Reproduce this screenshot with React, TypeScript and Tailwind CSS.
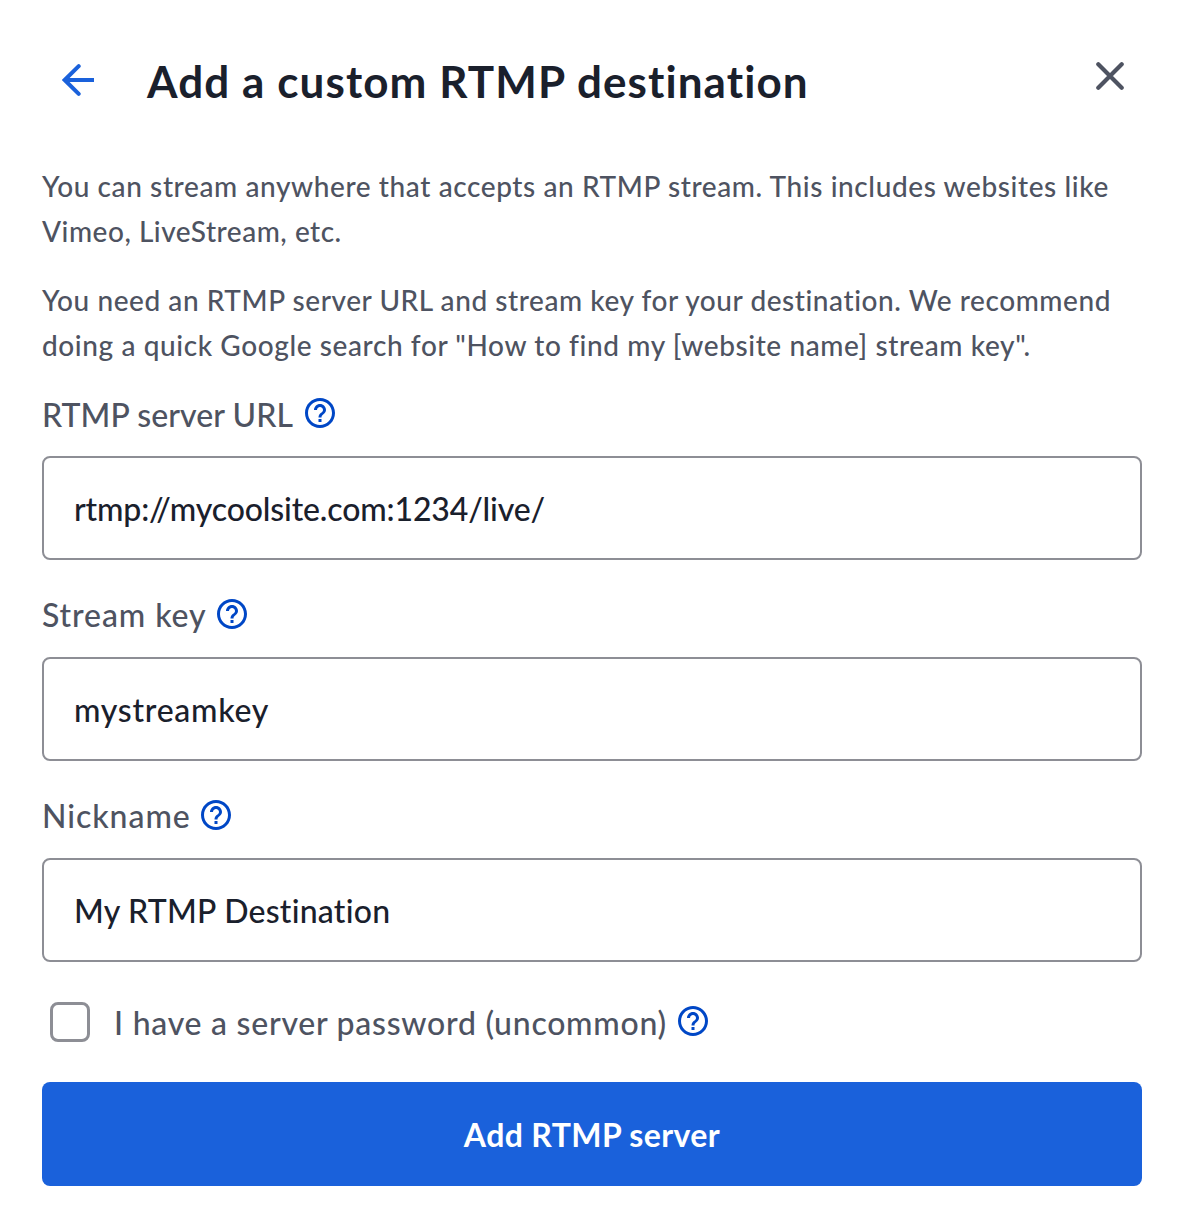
import React, { useState } from 'react';
import { MdHelpOutline } from 'react-icons/md';

interface FieldProps {
  id: string;
  label: string;
  labelClass: string;
  inputClass: string;
  value: string;
  onChange: (value: string) => void;
}

const HelpButton: React.FC<{ label: string }> = ({ label }) => (
  <button type="button" aria-label={label} className="shrink-0 text-[#0047c6]">
    <MdHelpOutline className="size-9" />
  </button>
);

const Field: React.FC<FieldProps> = ({ id, label, labelClass, inputClass, value, onChange }) => (
  <div>
    <div className="flex h-[46px] items-center">
      <label htmlFor={id} className={`leading-[46px] ${labelClass}`}>
        {label}
      </label>
      <HelpButton label={`Help: ${label}`} />
    </div>
    <input
      id={id}
      type="text"
      value={value}
      onChange={(e) => onChange(e.target.value)}
      className={`mt-5 block h-[104px] w-full rounded-lg border-2 border-[#8d8e95] bg-white px-[30px] text-[#1a202c] outline-none ${inputClass}`}
    />
  </div>
);

export default function App() {
  const [serverUrl, setServerUrl] = useState('rtmp://mycoolsite.com:1234/live/');
  const [streamKey, setStreamKey] = useState('mystreamkey');
  const [nickname, setNickname] = useState('My RTMP Destination');
  const [hasPassword, setHasPassword] = useState(false);

  return (
    <div className="h-[1228px] w-[1182px] overflow-hidden bg-white pt-[52px] pr-10 pl-[42px] font-['Lato','Liberation_Sans',sans-serif] text-[32px] font-medium text-[#4e5361]">
      {/* Header */}
      <header className="flex h-14 items-center pr-[18px] pl-5">
        <button type="button" aria-label="Back" className="text-[#1a61db]">
          <svg width="32" height="32" viewBox="0 0 32 32" fill="none" stroke="currentColor" strokeWidth="4">
            <path d="M16.7 2.2L2.7 16l14 13.8" strokeLinecap="round" strokeLinejoin="miter" />
            <path d="M3 16h29" />
          </svg>
        </button>
        <h1 className="ml-[53px] flex-1 pt-0.5 text-[44px] leading-[56px] font-bold tracking-[1.09px] whitespace-nowrap text-[#1a202c]">
          Add a custom RTMP destination
        </h1>
        <button type="button" aria-label="Close" className="-mt-2">
          <svg width="28" height="28" viewBox="0 0 28 28" fill="none" stroke="currentColor" strokeWidth="4.2" strokeLinecap="round">
            <path d="M2.3 2.3l23.4 23.4M25.7 2.3L2.3 25.7" />
          </svg>
        </button>
      </header>

      {/* Intro copy */}
      <div className="mt-14 space-y-6 text-[28px] leading-[45px] tracking-[0.6px] whitespace-nowrap">
        <p>
          You can stream anywhere that accepts an RTMP stream. This includes websites like
          <br />
          <span className="tracking-[0.52px]">Vimeo, LiveStream, etc.</span>
        </p>
        <p>
          <span className="tracking-[0.56px]">
            You need an RTMP server URL and stream key for your destination. We recommend
          </span>
          <br />
          doing a quick Google search for "How to find my [website name] stream key".
        </p>
      </div>

      <form onSubmit={(e) => e.preventDefault()}>
        <div className="mt-[22px] space-y-[31px]">
          <Field
            id="server-url"
            label="RTMP server URL"
            labelClass="mr-[9px] pt-1 tracking-[0.08px]"
            inputClass="tracking-[-0.14px]"
            value={serverUrl}
            onChange={setServerUrl}
          />
          <Field
            id="stream-key"
            label="Stream key"
            labelClass="mr-[7px] pt-0.5 tracking-[0.9px]"
            inputClass="tracking-[0.74px]"
            value={streamKey}
            onChange={setStreamKey}
          />
          <Field
            id="nickname"
            label="Nickname"
            labelClass="mr-[7px] pt-0.5 tracking-[0.95px]"
            inputClass="tracking-[0.24px]"
            value={nickname}
            onChange={setNickname}
          />
        </div>

        <div className="mt-10 flex h-10 items-center pl-2">
          <input
            id="has-password"
            type="checkbox"
            checked={hasPassword}
            onChange={(e) => setHasPassword(e.target.checked)}
            className="size-10 appearance-none rounded-lg border-[3px] border-[#8d8e95] bg-white checked:bg-[#1a61db]"
          />
          <label htmlFor="has-password" className="mr-2 ml-6 pt-0.5 leading-10 tracking-[0.74px] whitespace-nowrap">
            I have a server password (uncommon)
          </label>
          <div className="-mt-0.5 flex">
            <HelpButton label="Help: server password" />
          </div>
        </div>

        <button
          type="submit"
          className="mt-10 block h-[104px] w-full rounded-lg bg-[#1a61db] pt-0.5 font-bold tracking-[0.38px] text-white"
        >
          Add RTMP server
        </button>
      </form>
    </div>
  );
}
